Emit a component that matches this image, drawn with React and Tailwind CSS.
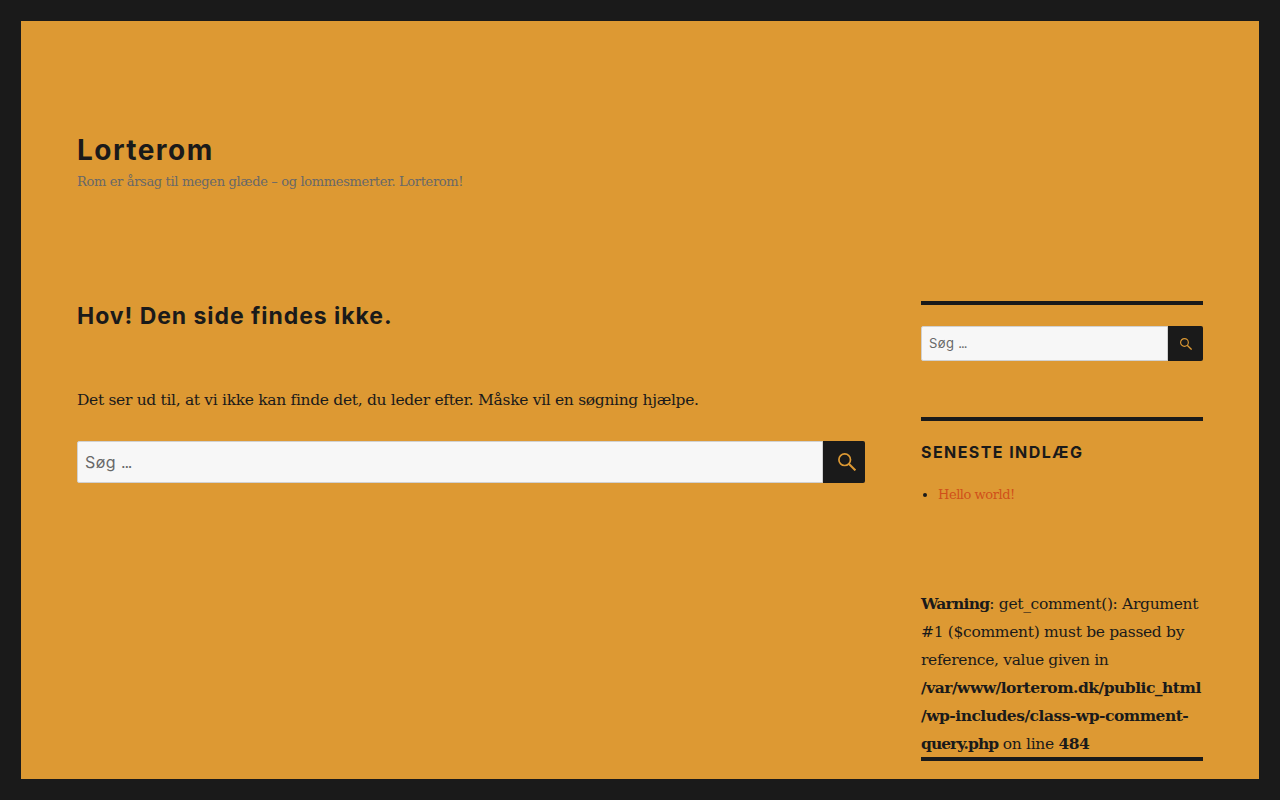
const sans = "font-['Inter',sans-serif]";
const serif = "font-['DejaVu_Serif',serif]";

function SearchIcon({ size }) {
  return (
    <svg width={size} height={size} viewBox="0 0 18 18" fill="none" stroke="#dd9933" strokeWidth="1.7">
      <circle cx="6.7" cy="6.7" r="5.8" />
      <path d="M10.8 10.8 L17.4 17.4" strokeWidth="2" />
    </svg>
  );
}

function SearchBox({ big }) {
  return (
    <div className={big ? "flex h-[42px]" : "flex h-[35px]"}>
      <div className={`flex-1 flex items-center bg-[#f7f7f7] border border-[#d1d1d1] rounded-l-[2px] text-[#686868] whitespace-pre ${sans} ${big ? "pl-[7px] text-[16px]" : "pl-[7px] text-[13px]"}`}>
        <span className="tracking-[0.03em]">Søg </span>
        <span className="tracking-[-0.08em]">...</span>
      </div>
      <div className={`bg-[#1a1a1a] rounded-r-[2px] flex items-center justify-center ${big ? "w-[42px] pl-[5px]" : "w-[35px] pl-px"}`}>
        <SearchIcon size={big ? 18 : 12} />
      </div>
    </div>
  );
}

export default function App() {
  return (
    <div className="h-[800px] overflow-hidden bg-[#1a1a1a] p-[21px]">
      <div className="h-[758px] overflow-hidden bg-[#dd9933] px-[56px] text-[#1a1a1a]">
        <header className="pt-[112px] h-[280px]">
          <div className={`${sans} font-bold text-[28px] leading-[35px] tracking-[1.45px]`}>Lorterom</div>
          <div className={`${serif} text-[#686868] text-[13px] leading-[21px] mt-[3px] tracking-[-0.335px]`}>Rom er årsag til megen glæde – og lommesmerter. Lorterom!</div>
        </header>
        <div className="flex gap-[56px]">
          <main className="w-[788px]">
            <h1 className={`${sans} font-bold text-[23px] leading-[28px] tracking-[0.95px] translate-y-px`}>Hov! Den side findes ikke.</h1>
            <p className={`${serif} text-[15.5px] leading-[28px] mt-[56px] tracking-[-0.32px] translate-y-px`}>Det ser ud til, at vi ikke kan finde det, du leder efter. Måske vil en søgning hjælpe.</p>
            <div className="mt-[28px]"><SearchBox big /></div>
          </main>
          <aside className="w-[282px]">
            <div className="border-t-4 border-[#1a1a1a] pt-[21px]"><SearchBox /></div>
            <div className="border-t-4 border-[#1a1a1a] mt-[56px] pt-[21px]">
              <h2 className={`${sans} font-bold text-[16px] leading-[21px] tracking-[1.42px] uppercase`}>Seneste indlæg</h2>
              <ul className={`${serif} list-disc pl-[17px] mt-[21px] text-[13px] leading-[21px] tracking-[-0.45px]`}>
                <li><span className="text-[#d0501a]">Hello world!</span></li>
              </ul>
            </div>
            <div className={`${serif} text-[15.5px] leading-[28px] mt-[84px] tracking-[-0.32px] pt-px h-[168px]`}>
              <b className="tracking-[-0.75px]">Warning</b>: get_comment(): Argument #1 ($comment) must be passed by reference, value given in <b className="tracking-[-0.5px]">/var/www/lorterom.dk/public_html<br />/wp-includes/class-wp-comment-<br /><span className="tracking-[-0.95px]">query.php</span></b> on line <b className="tracking-[-0.5px]">484</b>
            </div>
            <div className="border-t-4 border-[#1a1a1a]" />
          </aside>
        </div>
      </div>
    </div>
  );
}
